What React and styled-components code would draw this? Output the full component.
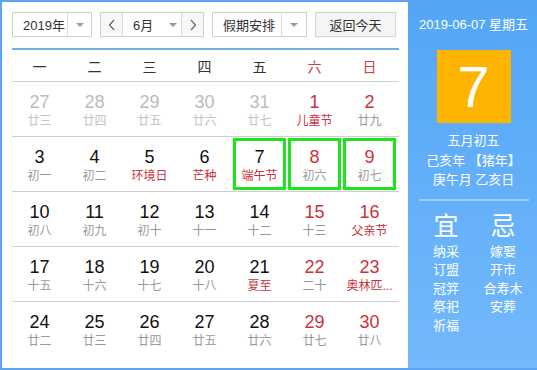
import React from "react";
import styled, { createGlobalStyle } from "styled-components";

const GlobalStyle = createGlobalStyle`
	html, body {
		margin: 0;
		padding: 0;
		background: #fff;
	}
	body {
		font-family: "Liberation Sans", "Noto Sans CJK SC", sans-serif;
	}
	* {
		box-sizing: border-box;
	}
`;

const CN = `"Liberation Sans", "Noto Sans CJK SC", sans-serif`;

const Frame = styled.div`
	width: 537px;
	height: 370px;
	border: 2px solid #5aa4f3;
	border-right: none;
	display: flex;
	background: #fff;
`;

const Main = styled.div`
	width: 406px;
	padding: 10px 9px 0 10px;
	display: flex;
	flex-direction: column;
`;

const Toolbar = styled.div`
	display: flex;
	height: 25px;
	gap: 8px;
`;

const Select = styled.div`
	display: flex;
	width: ${(p) => p.width}px;
	height: 25px;
	border: 1px solid #cfcfcf;
	background: #fff;
	font-family: ${CN};
	font-size: 13px;
	color: #333;
`;

const SelectText = styled.div`
	flex: 1;
	display: flex;
	align-items: center;
	padding-left: ${(p) => p.pad || 10}px;
	border-right: ${(p) => (p.divided ? "1px solid #dcdcdc" : "none")};
`;

const Arrow = styled.div`
	width: ${(p) => p.w || 23}px;
	display: flex;
	align-items: center;
	justify-content: center;

	&::after {
		content: "";
		border-left: 4px solid transparent;
		border-right: 4px solid transparent;
		border-top: 4px solid #999;
	}
`;

const StepButton = styled.div`
	width: 22px;
	display: flex;
	align-items: center;
	justify-content: center;
	background: #f7f7f7;
	border-${(p) => (p.left ? "right" : "left")}: 1px solid #dcdcdc;
	color: #666;
`;

const TodayButton = styled.div`
	width: 81px;
	height: 25px;
	border: 1px solid #d4d4d4;
	background: #f5f5f5;
	display: flex;
	align-items: center;
	justify-content: center;
	font-family: ${CN};
	font-size: 13px;
	color: #333;
`;

const Weekdays = styled.div`
	margin-top: 11px;
	border-top: 2px solid #74acea;
	border-bottom: 1px solid #cfcfcf;
	display: grid;
	grid-template-columns: repeat(7, 55px);
	height: 34px;
`;

const Weekday = styled.div`
	display: flex;
	align-items: center;
	justify-content: center;
	font-family: ${CN};
	font-size: 14px;
	color: ${(p) => (p.weekend ? "#c8434a" : "#333")};
`;

const Row = styled.div`
	display: grid;
	grid-template-columns: repeat(7, 55px);
	height: 55px;
	border-bottom: ${(p) => (p.last ? "none" : "1px solid #cfcfcf")};
`;

const Cell = styled.div`
	display: flex;
	flex-direction: column;
	align-items: center;
	padding-top: 10px;
	outline: ${(p) => (p.selected ? "3px solid #1be61b" : "none")};
	outline-offset: -4px;
`;

const DayNum = styled.div`
	font-family: "Liberation Sans", Arial, sans-serif;
	font-size: 18px;
	line-height: 20px;
	color: ${(p) => p.color};
`;

const Lunar = styled.div`
	font-family: ${CN};
	font-size: 12px;
	line-height: 18px;
	color: ${(p) => p.color};
	white-space: nowrap;
`;

const Panel = styled.div`
	width: 129px;
	background: linear-gradient(#53a6f7, #73b9fb);
	display: flex;
	flex-direction: column;
	align-items: center;
	padding-top: 13px;
	color: #fff;
	font-family: ${CN};
`;

const DateLine = styled.div`
	font-size: 13px;
	line-height: 20px;
	padding-left: 2px;
`;

const BigDay = styled.div`
	margin-top: 15px;
	width: 74px;
	height: 73px;
	background: #ffb400;
	display: flex;
	align-items: center;
	justify-content: center;
	font-family: "Liberation Sans", Arial, sans-serif;
	font-size: 58px;
	color: #fff;
	margin-left: 2px;
`;

const LunarInfo = styled.div`
	margin-top: 8px;
	font-size: 13px;
	line-height: 19.5px;
	text-align: center;
	padding-left: 2px;
`;

const Divider = styled.div`
	margin-top: 9px;
	width: 110px;
	height: 2px;
	background: rgba(255, 255, 255, 0.35);
	margin-left: 2px;
`;

const Advice = styled.div`
	display: flex;
	margin-top: 10px;
	padding-left: 4px;
`;

const AdviceCol = styled.div`
	width: 57px;
	display: flex;
	flex-direction: column;
	align-items: center;
`;

const AdviceHead = styled.div`
	font-size: 25px;
	line-height: 30px;
	margin-bottom: 2px;
`;

const AdviceItem = styled.div`
	font-size: 13px;
	line-height: 18.5px;
	white-space: nowrap;
`;

const RED = "#cc3139";
const BLACK = "#111";
const FADE = "#bbb";
const GRAY = "#999";

// [day, lunar, kind] kind: f=faded, r=red number, l=red lunar, b=both red, s=selected
const weeks = [
	[["27", "廿三", "f"], ["28", "廿四", "f"], ["29", "廿五", "f"], ["30", "廿六", "f"], ["31", "廿七", "f"], ["1", "儿童节", "b"], ["2", "廿九", "r"]],
	[["3", "初一"], ["4", "初二"], ["5", "环境日", "l"], ["6", "芒种", "l"], ["7", "端午节", "ls"], ["8", "初六", "rs"], ["9", "初七", "rs"]],
	[["10", "初八"], ["11", "初九"], ["12", "初十"], ["13", "十一"], ["14", "十二"], ["15", "十三", "r"], ["16", "父亲节", "b"]],
	[["17", "十五"], ["18", "十六"], ["19", "十七"], ["20", "十八"], ["21", "夏至", "l"], ["22", "二十", "r"], ["23", "奥林匹...", "b"]],
	[["24", "廿二"], ["25", "廿三"], ["26", "廿四"], ["27", "廿五"], ["28", "廿六"], ["29", "廿七", "r"], ["30", "廿八", "r"]],
];

const numColor = (k = "") => {
	if (k.includes("f")) return FADE;
	if (k.includes("r") || k.includes("b")) return RED;
	return BLACK;
};

const lunarColor = (k = "") => {
	if (k.includes("f")) return "#c4c4c4";
	if (k.includes("l") || k.includes("b")) return RED;
	return GRAY;
};

const yi = ["纳采", "订盟", "冠笄", "祭祀", "祈福"];
const ji = ["嫁娶", "开市", "合寿木", "安葬"];

const App = () => {
	return (
		<>
			<GlobalStyle />
			<Frame>
				<Main>
					<Toolbar>
						<Select width={80}>
							<SelectText divided pad={10}>2019年</SelectText>
							<Arrow />
						</Select>
						<Select width={104}>
							<StepButton left>
								<svg width="8" height="12" viewBox="0 0 8 12">
									<path d="M6 1L1.5 6L6 11" fill="none" stroke="#666" strokeWidth="1.2" />
								</svg>
							</StepButton>
							<SelectText pad={10}>6月</SelectText>
							<Arrow w={16} />
							<StepButton>
								<svg width="8" height="12" viewBox="0 0 8 12">
									<path d="M2 1L6.5 6L2 11" fill="none" stroke="#666" strokeWidth="1.2" />
								</svg>
							</StepButton>
						</Select>
						<Select width={95}>
							<SelectText divided pad={10}>假期安排</SelectText>
							<Arrow w={24} />
						</Select>
						<TodayButton>返回今天</TodayButton>
					</Toolbar>
					<Weekdays>
						{["一", "二", "三", "四", "五", "六", "日"].map((d, i) => (
							<Weekday key={d} weekend={i > 4}>
								{d}
							</Weekday>
						))}
					</Weekdays>
					{weeks.map((week, wi) => (
						<Row key={wi} last={wi === weeks.length - 1}>
							{week.map(([n, l, k]) => (
								<Cell key={n + l} selected={k && k.includes("s")}>
									<DayNum color={numColor(k)}>{n}</DayNum>
									<Lunar color={lunarColor(k)}>{l}</Lunar>
								</Cell>
							))}
						</Row>
					))}
				</Main>
				<Panel>
					<DateLine>2019-06-07 星期五</DateLine>
					<BigDay>7</BigDay>
					<LunarInfo>
						五月初五
						<br />
						己亥年 【猪年】
						<br />
						庚午月 乙亥日
					</LunarInfo>
					<Divider />
					<Advice>
						<AdviceCol>
							<AdviceHead>宜</AdviceHead>
							{yi.map((t) => (
								<AdviceItem key={t}>{t}</AdviceItem>
							))}
						</AdviceCol>
						<AdviceCol>
							<AdviceHead>忌</AdviceHead>
							{ji.map((t) => (
								<AdviceItem key={t}>{t}</AdviceItem>
							))}
						</AdviceCol>
					</Advice>
				</Panel>
			</Frame>
		</>
	);
};

export default App;
